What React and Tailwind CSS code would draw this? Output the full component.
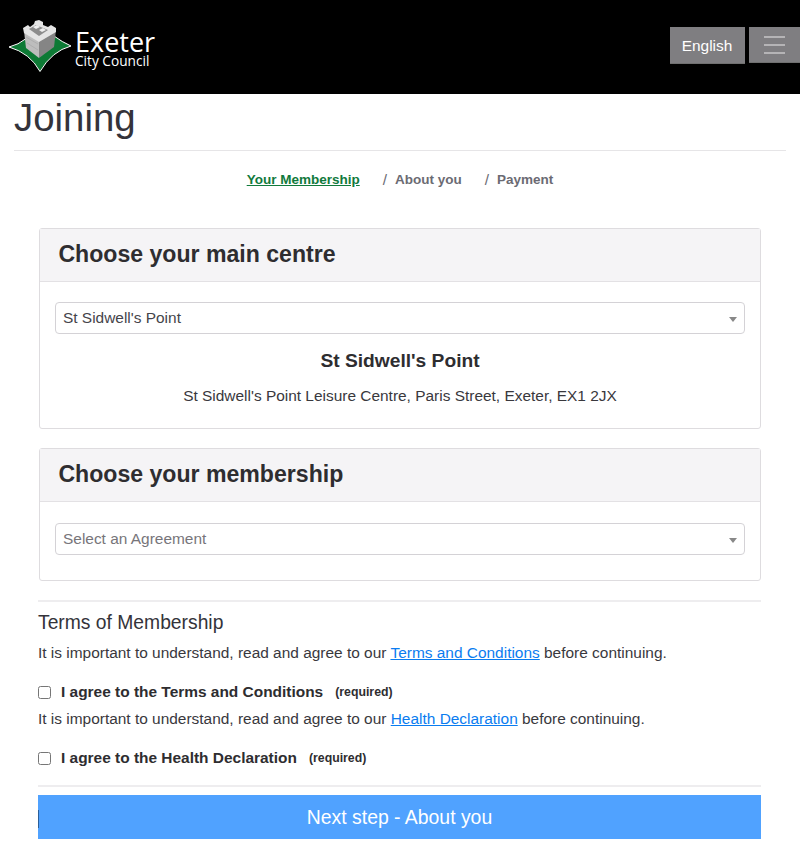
function Logo() {
  return (
    <svg width="66" height="56" viewBox="8 18 66 56" className="shrink-0">
      <path d="M9 47 Q18 45 27 38 L54 36 Q62 42 71 46 Q52 51 40 71.5 Q30 53 9 47 Z" fill="#0d7a35" stroke="#ffffff" strokeWidth="1" />
      <path d="M24 31 L39 40 L39 58 L26 48 Z" fill="#bdbdbd" />
      <path d="M39 40 L56 30 L54 47 L39 58 Z" fill="#858585" />
      <path d="M23 28 L28 25 L30 27 L34 24 L35 21 L39 20 L43 22 L43 25 L48 27 L51 25 L56 28 L56 32 L39 42 L24 33 Z" fill="#e4e4e4" />
      <path d="M29 29 L36 25 L48 30 L39 36 Z" fill="#8c8c8c" />
      <path d="M33 27 L37 25 L40 27 L36 29 Z M39 30 L43 28 L46 30 L42 32 Z" fill="#eeeeee" />
      <path d="M26 37 L38 44 M27 43 L38 50" stroke="#a9a9a9" strokeWidth="0.8" />
    </svg>
  )
}

function Panel({ title, children }) {
  return (
    <section className="mx-[39px] rounded-[3px] border border-[#dedcdf] bg-white">
      <h2 className="flex h-[53px] items-center border-b border-[#e3e1e4] bg-[#f5f4f6] px-[18.4px] pb-[2px] text-[23.1px] font-bold text-[#2e2d30]">{title}</h2>
      {children}
    </section>
  )
}

function FakeSelect({ value, muted }) {
  return (
    <div className={`flex h-[32px] items-center justify-between rounded-[4px] border border-[#d4d2d6] bg-white pl-[7px] pr-[7px] text-[15.45px] ${muted ? 'text-[#77757a]' : 'text-[#45444a]'}`}>
      <span>{value}</span>
      <span className="mt-[2px] h-0 w-0 border-x-[4px] border-t-[5px] border-x-transparent border-t-[#888888]" />
    </div>
  )
}

function Agree({ label }) {
  return (
    <label className="flex h-[22px] items-center text-[#2e2d30]">
      <input type="checkbox" className="ml-0 mr-[10px] h-[13px] w-[13px]" />
      <span className="text-[15.45px] font-bold">{label}</span>
      <span className="ml-[12px] mt-[1px] text-[12.3px] font-bold">(required)</span>
    </label>
  )
}

export default function App() {
  return (
    <div className="min-h-[855px] bg-white text-[#2e2d30]" style={{ fontFamily: '"Liberation Sans", Arial, sans-serif' }}>
      <header className="flex h-[94px] items-start justify-between bg-black">
        <div className="ml-[8px] mt-[18px] flex items-start">
          <Logo />
          <div className="ml-[1px] mt-[11px] text-white" style={{ fontFamily: '"Open Sans", sans-serif' }}>
            <div className="text-[27px] leading-[25px]">Exeter</div>
            <div className="text-[13.7px] leading-[14px]">City Council</div>
          </div>
        </div>
        <div className="mt-[27px] flex gap-[4px]">
          <button className="flex h-[37px] w-[75px] items-center justify-center border-b border-[#707070] bg-[#7f7e81] pr-[1px] pt-[1px] text-[15.45px] text-white">English</button>
          <button className="flex h-[36px] w-[51px] flex-col items-center justify-center gap-[6px] border-b border-[#707070] bg-[#7f7e81] pr-[1px]">
            <span className="h-[2px] w-[21px] bg-[#b5b4b6]" />
            <span className="h-[2px] w-[21px] bg-[#b5b4b6]" />
            <span className="h-[2px] w-[21px] bg-[#b5b4b6]" />
          </button>
        </div>
      </header>

      <div className="mx-[14px] flex h-[57px] items-center border-b border-[#e6e5e7] pb-[7px]">
        <h1 className="text-[38.4px] font-normal leading-none text-[#34333a]">Joining</h1>
      </div>

      <nav className="mt-[20px] flex h-[18px] items-center justify-center text-[13.5px] font-bold text-[#6b6b73]">
        <a className="text-[#117a3c] underline">Your Membership</a>
        <span className="ml-[23px] mr-[8px] text-[15.36px] font-normal">/</span>
        <span>About you</span>
        <span className="ml-[23px] mr-[8px] text-[15.36px] font-normal">/</span>
        <span>Payment</span>
      </nav>

      <div className="mt-[39px]">
        <Panel title="Choose your main centre">
          <div className="px-[15px] pb-[21px] pt-[20px]">
            <FakeSelect value="St Sidwell's Point" />
            <h3 className="mt-[15px] text-center text-[19.2px] font-bold leading-[24px] text-[#2e2d30]">St Sidwell's Point</h3>
            <p className="mt-[12px] text-center text-[15.45px] leading-[22px] text-[#39383d]">St Sidwell's Point Leisure Centre, Paris Street, Exeter, EX1 2JX</p>
          </div>
        </Panel>
      </div>

      <div className="mt-[19px]">
        <Panel title="Choose your membership">
          <div className="px-[15px] pb-[25px] pt-[21px]">
            <FakeSelect value="Select an Agreement" muted />
          </div>
        </Panel>
      </div>

      <div className="ml-[38px] mr-[39px] mt-[19px] border-t-2 border-[#eeedef] pt-[9px]">
        <h3 className="text-[19.3px] leading-[24px] text-[#34333a]">Terms of Membership</h3>
        <p className="mt-[7px] text-[15.45px] leading-[22px] text-[#39383d]">
          It is important to understand, read and agree to our <a className="text-[#0a7cf0] underline">Terms and Conditions</a> before continuing.
        </p>
        <div className="mt-[17px]"><Agree label="I agree to the Terms and Conditions" /></div>
        <p className="mt-[5px] text-[15.45px] leading-[22px] text-[#39383d]">
          It is important to understand, read and agree to our <a className="text-[#0a7cf0] underline">Health Declaration</a> before continuing.
        </p>
        <div className="mt-[17px]"><Agree label="I agree to the Health Declaration" /></div>
        <div className="mt-[16px] border-t-2 border-[#eeedef]" />
        <button className="relative mt-[8px] flex h-[44px] w-full items-center justify-center bg-[#50a2ff] pt-[1px] text-[19.4px] text-white">
          <span className="absolute left-0 top-[15px] h-[18px] w-[1px] bg-[#2b5f99]" />
          Next step - About you
        </button>
      </div>
    </div>
  )
}
